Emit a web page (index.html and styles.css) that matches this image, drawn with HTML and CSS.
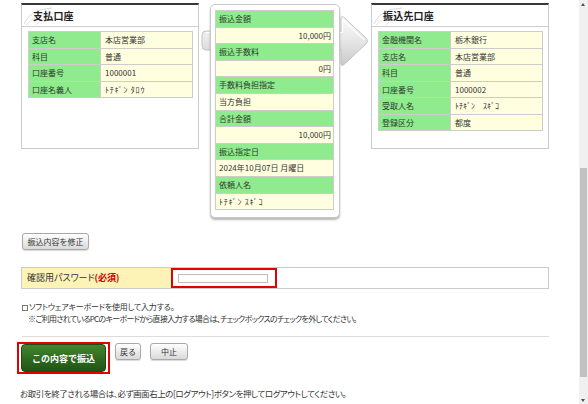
FILE: index.html
```html
<!DOCTYPE html>
<html lang="ja">
<head>
<meta charset="utf-8">
<title>振込内容確認</title>
<link rel="stylesheet" href="styles.css">
</head>
<body>
<div class="screen">
  <main class="page">
    <section class="transfer">
      <svg class="flow-arrow" width="172" height="72" viewBox="0 0 172 72">
        <defs>
          <linearGradient id="ag" x1="0" y1="0" x2="0" y2="1">
            <stop offset="0" stop-color="#fbfbfb"/>
            <stop offset="0.5" stop-color="#e6e6e6"/>
            <stop offset="1" stop-color="#c9c9c9"/>
          </linearGradient>
        </defs>
        <path d="M6 31 H141 V19 Q141 15 144 17.5 L166 38 Q169 41 166 44 L144 64.5 Q141 67 141 63 V50 H6 Q2 50 2 46 V35 Q2 31 6 31 Z" fill="url(#ag)" stroke="#c4c4c4" stroke-width="1"/>
        <path d="M6 32.5 H142.5 V20 L164.5 40" fill="none" stroke="#ffffff" stroke-width="1.2" opacity="0.9"/>
      </svg>

      <div class="acct">
        <div class="acct-head">
          <svg class="swoosh" width="44" height="21" viewBox="0 0 44 21">
            <path d="M2 19 Q8 4 30 3" fill="none" stroke="#dcdcdc" stroke-width="1"/>
            <path d="M4 20 Q14 8 38 7" fill="none" stroke="#e4e4e4" stroke-width="1"/>
            <path d="M14 20 Q20 12 34 12" fill="none" stroke="#e8e8e8" stroke-width="1"/>
          </svg>
          <h2 class="acct-title">支払口座</h2>
        </div>
        <div class="kv">
          <div class="k">支店名</div><div class="v">本店営業部</div>
          <div class="k">科目</div><div class="v">普通</div>
          <div class="k">口座番号</div><div class="v">1000001</div>
          <div class="k">口座名義人</div><div class="v hk">ﾄﾁｷﾞﾝ ﾀﾛｳ</div>
        </div>
      </div>

      <div class="detail">
        <div class="detail-list">
          <div class="d-label">振込金額</div>
          <div class="d-val num">10,000円</div>
          <div class="d-label">振込手数料</div>
          <div class="d-val num">0円</div>
          <div class="d-label">手数料負担指定</div>
          <div class="d-val">当方負担</div>
          <div class="d-label">合計金額</div>
          <div class="d-val num">10,000円</div>
          <div class="d-label">振込指定日</div>
          <div class="d-val">2024年10月07日 月曜日</div>
          <div class="d-label">依頼人名</div>
          <div class="d-val hk">ﾄﾁｷﾞﾝ ｽｷﾞｺ</div>
        </div>
      </div>

      <div class="acct">
        <div class="acct-head">
          <svg class="swoosh" width="44" height="21" viewBox="0 0 44 21">
            <path d="M2 19 Q8 4 30 3" fill="none" stroke="#dcdcdc" stroke-width="1"/>
            <path d="M4 20 Q14 8 38 7" fill="none" stroke="#e4e4e4" stroke-width="1"/>
            <path d="M14 20 Q20 12 34 12" fill="none" stroke="#e8e8e8" stroke-width="1"/>
          </svg>
          <h2 class="acct-title">振込先口座</h2>
        </div>
        <div class="kv">
          <div class="k">金融機関名</div><div class="v">栃木銀行</div>
          <div class="k">支店名</div><div class="v">本店営業部</div>
          <div class="k">科目</div><div class="v">普通</div>
          <div class="k">口座番号</div><div class="v">1000002</div>
          <div class="k">受取人名</div><div class="v">ﾄﾁｷﾞﾝ　ｽｷﾞｺ</div>
          <div class="k">登録区分</div><div class="v">都度</div>
        </div>
      </div>
    </section>

    <div class="fix-row">
      <button class="btn btn-fix" type="button">振込内容を修正</button>
    </div>

    <div class="pw-row">
      <div class="pw-label">確認用パスワード<span class="req">(必須)</span></div>
      <div class="pw-cell">
        <div class="pw-focus"><input class="pw-input" type="password"></div>
      </div>
    </div>

    <div class="softkb">
      <div class="softkb-line"><span class="cb"></span>ソフトウェアキーボードを使用して入力する。</div>
      <div class="softkb-note">※ご利用されているPCのキーボードから直接入力する場合は、チェックボックスのチェックを外してください。</div>
    </div>

    <div class="actions">
      <div class="primary-focus"><button class="btn-primary" type="button">この内容で振込</button></div>
      <button class="btn btn-back" type="button">戻る</button>
      <button class="btn btn-stop" type="button">中止</button>
    </div>

    <p class="note">お取引を終了される場合は、必ず画面右上の[ログアウト]ボタンを押してログアウトしてください。</p>
  </main>

  <div class="scrollbar">
    <div class="sb-btn sb-up"></div>
    <div class="sb-track"><div class="sb-thumb"></div></div>
    <div class="sb-btn sb-down"></div>
  </div>
</div>
</body>
</html>
```

FILE: styles.css
```css
html, body {
  margin: 0;
  padding: 0;
  background: #fff;
}
body {
  font-family: "Noto Sans CJK JP", "Noto Sans", sans-serif;
  font-feature-settings: "palt";
  color: #333;
}
.screen {
  display: flex;
  width: 588px;
  height: 404px;
  overflow: hidden;
}
.page {
  flex: 1;
  min-width: 0;
  padding: 0 30px 0 21px;
}

/* ---------- transfer overview ---------- */
.transfer {
  position: relative;
  display: flex;
  align-items: flex-start;
  padding-top: 3px;
}
.flow-arrow {
  position: absolute;
  left: 179px;
  top: 0;
  z-index: 0;
}
.acct {
  position: relative;
  z-index: 1;
  box-sizing: border-box;
  width: 178px;
  height: 146px;
  border: 1px solid #cccccc;
  border-top: 2px solid #383838;
  background: #fff;
}
.acct + .detail { margin-left: 11px; }
.detail + .acct { margin-left: 31px; }
.acct-head {
  position: relative;
  height: 21px;
  border-bottom: 1px solid #cfcfcf;
}
.swoosh {
  position: absolute;
  left: 0;
  top: 0;
}
.acct-title {
  position: relative;
  margin: 0;
  padding-left: 11px;
  font-size: 10px;
  font-weight: bold;
  line-height: 21px;
  color: #222;
  letter-spacing: 0.2px;
}
.kv {
  display: grid;
  grid-template-columns: 72px 1fr;
  margin: 4px 5px 0 6px;
  border: 1px solid #cccccc;
  border-bottom: none;
}
.k, .v {
  box-sizing: border-box;
  height: 16.5px;
  border-bottom: 1px solid #cccccc;
  font-size: 8px;
  line-height: 15.5px;
  white-space: nowrap;
}
.k {
  background: #90ea8e;
  border-right: 1px solid #cccccc;
  padding-left: 3px;
  color: #2c3a2c;
}
.v {
  background: #ffffe0;
  padding-left: 4px;
}
.hk {
  letter-spacing: 0.8px;
}

.detail {
  position: relative;
  z-index: 1;
  box-sizing: border-box;
  width: 130px;
  margin-top: 1px;
  padding: 5px 5px 7px 4px;
  border: 1px solid #c9c9c9;
  border-radius: 5px;
  background: #fff;
  box-shadow: 0 2px 2px rgba(0, 0, 0, 0.28);
}
.detail-list {
  border: 1px solid #cccccc;
  border-bottom: none;
}
.d-label, .d-val {
  box-sizing: border-box;
  height: 16.6px;
  border-bottom: 1px solid #cccccc;
  font-size: 8px;
  line-height: 15.6px;
  padding: 0 2px 0 3px;
  white-space: nowrap;
}
.d-label {
  background: #90ea8e;
  color: #2c3a2c;
}
.d-val {
  background: #ffffe0;
}
.d-val.num {
  text-align: right;
}

/* ---------- buttons ---------- */
.btn {
  box-sizing: border-box;
  height: 17px;
  padding: 0 4px;
  border: 1px solid #a9a9a9;
  border-radius: 3px;
  background: linear-gradient(#ffffff, #e8e8e8 60%, #dadada);
  font-family: inherit;
  font-size: 8px;
  line-height: 15px;
  color: #333;
  white-space: nowrap;
  box-shadow: 0 1px 1px rgba(0, 0, 0, 0.15);
}
.fix-row {
  display: flex;
  margin-top: 15px;
  margin-left: 1px;
}
.btn-fix {
  width: 67px;
  padding: 0;
}

/* ---------- password ---------- */
.pw-row {
  display: flex;
  box-sizing: border-box;
  height: 22px;
  margin-top: 17px;
  border: 1px solid #cccccc;
}
.pw-label {
  width: 149px;
  padding-left: 5px;
  box-sizing: border-box;
  background: #fdf3b6;
  font-size: 9px;
  line-height: 20px;
  white-space: nowrap;
}
.req {
  color: #d40000;
  font-weight: bold;
}
.pw-cell {
  flex: 1;
  display: flex;
  align-items: center;
}
.pw-focus {
  box-sizing: border-box;
  display: flex;
  align-items: center;
  width: 106px;
  height: 20px;
  border: 2px solid #e30000;
}
.pw-input {
  box-sizing: border-box;
  width: 90px;
  height: 9px;
  margin: 0 0 0 5px;
  padding: 0;
  border: 1px solid #bdbdbd;
  background: #fff;
  outline: none;
}

/* ---------- software keyboard ---------- */
.softkb {
  margin-top: 12px;
  margin-left: 1px;
  font-size: 8px;
  line-height: 12px;
  white-space: nowrap;
}
.softkb-line {
  letter-spacing: -0.2px;
}
.cb {
  display: inline-block;
  box-sizing: border-box;
  width: 6px;
  height: 6px;
  margin-right: 1px;
  border: 1px solid #777;
  vertical-align: -0.5px;
}
.softkb-note {
  padding-left: 6px;
  letter-spacing: -0.7px;
}

/* ---------- actions ---------- */
.actions {
  display: flex;
  align-items: flex-start;
  margin-top: 11px;
  padding-top: 5px;
  border-top: 1px solid #dddddd;
  margin-left: 1px;
}
.primary-focus {
  display: flex;
  margin-left: -5px;
  padding: 0 2px;
  border: 2px solid #e30000;
}
.btn-primary {
  box-sizing: border-box;
  width: 85px;
  height: 28px;
  border: 1px solid #1e4a14;
  border-radius: 4px;
  background: linear-gradient(#43862e, #2e6a1e 55%, #21531a);
  font-family: inherit;
  font-size: 9px;
  font-weight: bold;
  color: #fff;
  padding: 0;
}
.btn-back {
  width: 26px;
  padding: 0;
  margin: 1px 0 0 5px;
}
.btn-stop {
  width: 38px;
  padding: 0;
  margin: 1px 0 0 9px;
}

.note {
  margin: 13px 0 0 -1px;
  font-size: 8.5px;
  line-height: 12px;
  letter-spacing: -0.45px;
  white-space: nowrap;
}

/* ---------- scrollbar ---------- */
.scrollbar {
  display: flex;
  flex-direction: column;
  width: 9px;
  background: #f0f0f0;
}
.sb-btn {
  position: relative;
  height: 9px;
}
.sb-up::after,
.sb-down::after {
  content: "";
  position: absolute;
  left: 2px;
  border-left: 2.5px solid transparent;
  border-right: 2.5px solid transparent;
}
.sb-up::after {
  top: 3px;
  border-bottom: 3px solid #505050;
}
.sb-down::after {
  bottom: 2px;
  border-top: 3px solid #505050;
}
.sb-track {
  flex: 1;
  display: flex;
  flex-direction: column;
}
.sb-thumb {
  height: 209px;
  margin: 159px 1px 0 1px;
  background: #c1c1c1;
}
```
